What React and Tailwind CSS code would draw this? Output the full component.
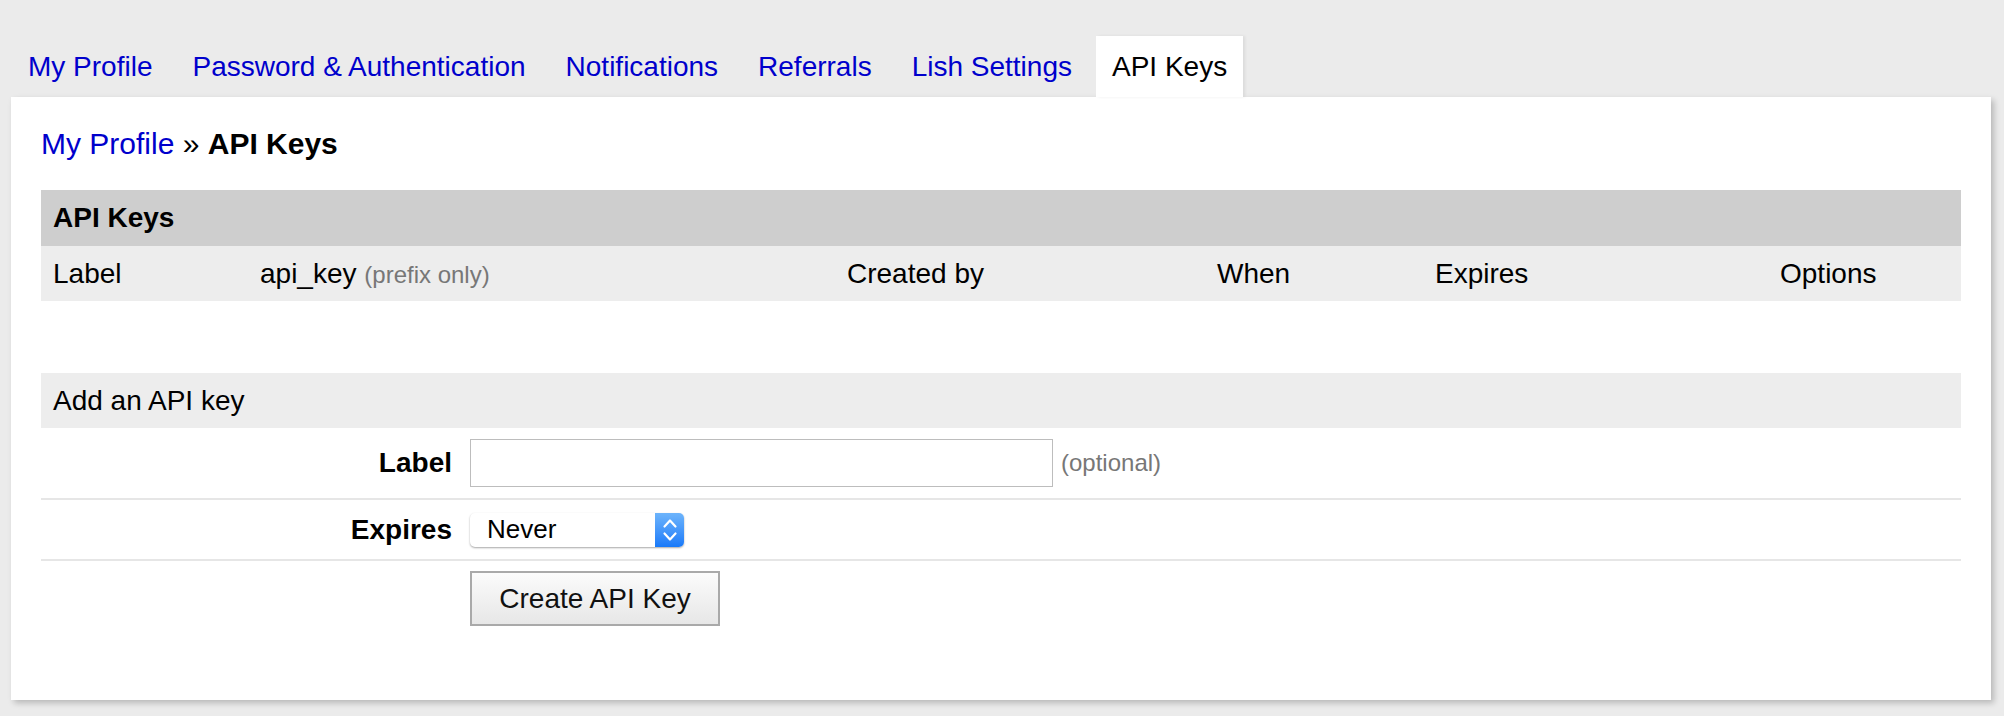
import { useState } from "react";

const tabs = ["My Profile", "Password & Authentication", "Notifications", "Referrals", "Lish Settings", "API Keys"];

function Stepper() {
    return (
        <div className="w-[29px] h-full rounded-r-[5px] bg-gradient-to-b from-[#6db4fb] to-[#1679f9] flex items-center justify-center">
            <svg width="16" height="26" viewBox="0 0 16 26" fill="none" stroke="white" strokeWidth="2.2" strokeLinecap="round" strokeLinejoin="round">
                <path d="M2.5 9.5 L8 3.5 L13.5 9.5" />
                <path d="M2.5 16.5 L8 22.5 L13.5 16.5" />
            </svg>
        </div>
    );
}

export default function App() {
    const [active] = useState("API Keys");
    const [label, setLabel] = useState("");

    return (
        <div className="min-h-[716px] bg-[#ebebeb] text-black" style={{ fontFamily: '"Liberation Sans", Arial, sans-serif' }}>
            {/* tabs */}
            <div className="flex gap-[8px] pl-[12px] pt-[36px]">
                {tabs.map((t) => (
                    <div
                        key={t}
                        className={
                            t === active
                                ? "h-[61px] px-[16px] flex items-center text-[28px] bg-white text-black shadow-[2px_0_3px_rgba(0,0,0,0.07)]"
                                : "h-[61px] px-[16px] flex items-center text-[28px] text-[#0000cc]"
                        }
                    >
                        {t}
                    </div>
                ))}
            </div>

            {/* panel */}
            <div className="ml-[11px] w-[1980px] h-[603px] bg-white px-[30px] pt-[30px] shadow-[3px_3px_6px_rgba(0,0,0,0.22)]">
                <div className="h-[34px] leading-[34px] text-[30px]">
                    <span className="text-[#0000cc]">My Profile</span> » <span className="font-bold">API Keys</span>
                </div>

                <div className="mt-[29px]">
                    <div className="h-[56px] bg-[#cecece] flex items-center px-[12px] text-[28px] font-bold">API Keys</div>
                    <div className="h-[55px] bg-[#ededed] grid grid-cols-[207px_587px_370px_218px_345px_193px] items-center text-[28px]">
                        <div className="px-[12px]">Label</div>
                        <div className="px-[12px]">
                            api_key <span className="text-[24px] text-[#777]">(prefix only)</span>
                        </div>
                        <div className="px-[12px]">Created by</div>
                        <div className="px-[12px]">When</div>
                        <div className="px-[12px]">Expires</div>
                        <div className="px-[12px]">Options</div>
                    </div>
                    <div className="h-[72px]"></div>

                    <div className="h-[55px] bg-[#ededed] flex items-center px-[12px] text-[28px]">Add an API key</div>

                    <div className="flex items-center h-[72px] border-b-2 border-[#e6e6e6]">
                        <div className="w-[429px] pr-[18px] text-right text-[28px] font-bold">Label</div>
                        <input
                            value={label}
                            onChange={(e) => setLabel(e.target.value)}
                            className="w-[583px] h-[48px] border border-[#bdbdbd] outline-none px-[8px] text-[26px]"
                        />
                        <span className="ml-[8px] text-[24px] text-[#777]">(optional)</span>
                    </div>

                    <div className="flex items-center h-[61px] border-b-2 border-[#e6e6e6]">
                        <div className="w-[429px] pr-[18px] text-right text-[28px] font-bold">Expires</div>
                        <div className="w-[214px] h-[34px] flex rounded-[5px] bg-white shadow-[0_1px_2px_rgba(0,0,0,0.35)]">
                            <div className="flex-1 pl-[17px] flex items-center text-[26px]">Never</div>
                            <Stepper />
                        </div>
                    </div>

                    <div className="flex pt-[10px]">
                        <div className="w-[429px]"></div>
                        <button className="w-[250px] h-[55px] border-2 border-[#a9a9a9] bg-gradient-to-b from-[#fbfbfb] to-[#e7e7e7] text-[28px] text-[#111]">
                            Create API Key
                        </button>
                    </div>
                </div>
            </div>
        </div>
    );
}
